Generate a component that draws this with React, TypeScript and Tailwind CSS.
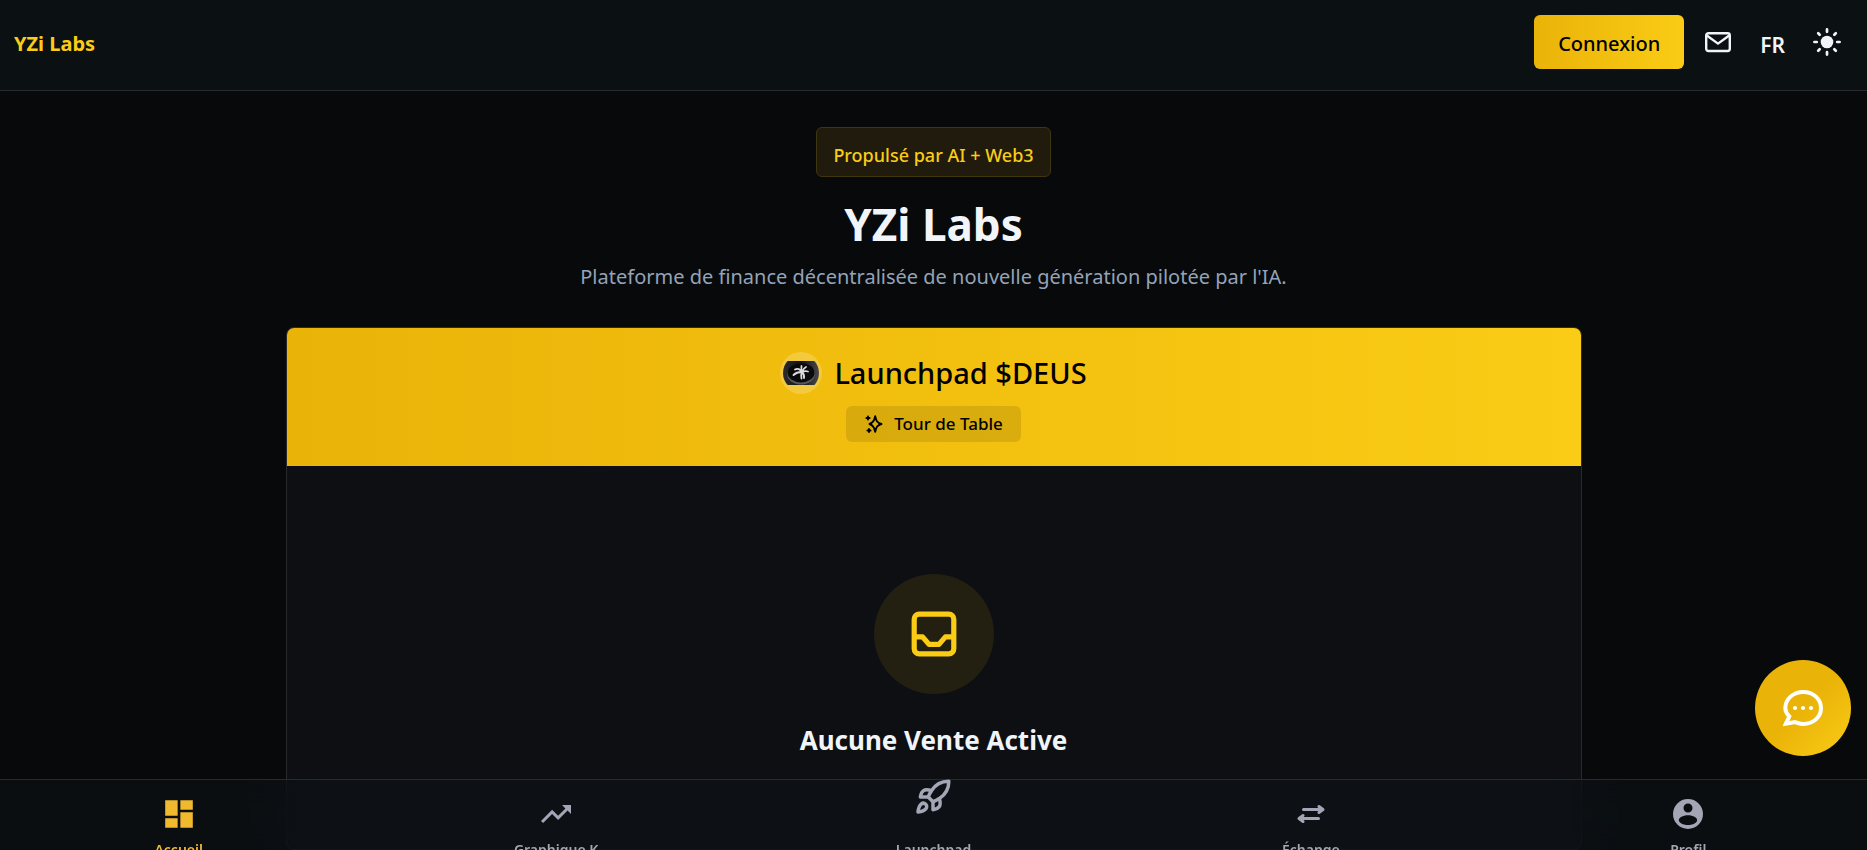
import type { ReactNode } from 'react';
import { LuRocket } from 'react-icons/lu';

interface NavItem {
  label: string;
  icon: ReactNode;
  active?: boolean;
  raised?: boolean;
}

const NAV_ITEMS: NavItem[] = [
  { label: 'Accueil', icon: <DashboardIcon />, active: true },
  { label: 'Graphique K', icon: <TrendingIcon /> },
  { label: 'Launchpad', icon: <LuRocket strokeWidth={2.2} className="w-[38px] h-[38px]" />, raised: true },
  { label: 'Échange', icon: <SwapIcon /> },
  { label: 'Profil', icon: <ProfileIcon /> },
];

function DashboardIcon() {
  return (
    <svg viewBox="0 0 24 24" fill="currentColor" className="w-9 h-9" aria-hidden="true">
      <path d="M2.800 2.800h8.300v10.300H2.800zM12.900 2.800h8.300v6.300h-8.300zM12.900 10.900h8.300v10.300h-8.300zM2.800 14.900h8.300v6.300H2.800z" />
    </svg>
  );
}

function TrendingIcon() {
  return (
    <svg viewBox="0 0 24 24" fill="currentColor" className="w-9 h-9" aria-hidden="true">
      <path d="m16 6 2.290 2.290-4.880 4.880-4-4L2 16.590 3.410 18l6-6 4 4 6.300-6.290L22 12V6z" />
    </svg>
  );
}

function SwapIcon() {
  return (
    <svg
      viewBox="0 0 24 24"
      fill="currentColor"
      stroke="currentColor"
      strokeWidth="2"
      strokeLinecap="round"
      strokeLinejoin="round"
      className="w-9 h-9"
      aria-hidden="true"
    >
      <path d="M7 9H19M17.300 7l2.700 2-2.700 2" />
      <path d="M17 15H5M6.700 13l-2.700 2 2.700 2" />
    </svg>
  );
}

function ProfileIcon() {
  return (
    <svg viewBox="0 0 24 24" fill="currentColor" className="w-9 h-9" aria-hidden="true">
      <path
        fillRule="evenodd"
        d="M12 2a10 10 0 1 0 0 20 10 10 0 0 0 0-20zm0 3a3 3 0 1 1 0 6 3 3 0 0 1 0-6zm0 7.900c3.500 0 6.100 1.700 6.100 3.200s-2.600 3.200-6.100 3.200-6.100-1.700-6.100-3.200 2.600-3.200 6.100-3.200z"
      />
    </svg>
  );
}

function MailIcon() {
  return (
    <svg viewBox="0 0 28 28" fill="none" stroke="currentColor" strokeWidth="2.400" strokeLinejoin="round" className="w-7 h-7" aria-hidden="true">
      <rect x="2.200" y="5.200" width="23.600" height="17.800" rx="2.200" />
      <path d="M2.800 7.500 14 15.600l11.200-8.100" />
    </svg>
  );
}

function SunIcon() {
  return (
    <svg viewBox="0 0 28 28" className="w-7 h-7" aria-hidden="true">
      <circle cx="14" cy="14" r="6.300" fill="currentColor" />
      <path
        d="M14 1.400v2.400M14 24.200v2.400M1.400 14h2.400M24.200 14h2.400M5.200 5.200l1.500 1.500M21.300 21.300l1.500 1.500M5.200 22.800l1.500-1.500M21.300 6.700l1.500-1.500"
        stroke="currentColor"
        strokeWidth="2.700"
        strokeLinecap="round"
      />
    </svg>
  );
}

function SparkIcon() {
  return (
    <svg
      viewBox="0 0 20 20"
      fill="none"
      stroke="currentColor"
      strokeWidth="1.900"
      strokeLinecap="round"
      strokeLinejoin="round"
      className="w-5 h-5"
      aria-hidden="true"
    >
      <path d="M11.200 2.300c.9 4.700 2.100 6.600 6.300 7.700-4.200 1.100-5.400 3-6.300 7.700-.9-4.700-2.100-6.600-5.700-7.700 3.600-1.100 4.800-3 5.700-7.700z" />
      <path d="M4 2.400v3.200M2.400 4h3.200M5 14.900v3.200M3.400 16.500h3.200" />
    </svg>
  );
}

function InboxIcon() {
  return (
    <svg
      viewBox="0 0 24 24"
      fill="none"
      stroke="currentColor"
      strokeWidth="2.600"
      strokeLinejoin="round"
      className="w-12 h-12"
      aria-hidden="true"
    >
      <rect x="2.100" y="2.100" width="19.800" height="19.800" rx="2.500" />
      <path d="M2 13.400h4.300l3.200 3.800h5l3.200-3.800H22" />
    </svg>
  );
}

function ChatIcon() {
  return (
    <svg viewBox="0 0 40 40" className="w-10 h-10" aria-hidden="true">
      <path
        d="M20.300 4C30.300 4 38 11 38 20s-7.700 16-17.700 16c-3.300 0-5.300-1-8.300-1.900L2.800 35.800l3.500-7.300C3.900 26 2.300 23.500 2.300 20c0-9 8-16 18-16z"
        fill="none"
        stroke="currentColor"
        strokeWidth="4"
      />
      <circle cx="12" cy="20" r="2.100" fill="currentColor" />
      <circle cx="20" cy="20" r="2.100" fill="currentColor" />
      <circle cx="28" cy="20" r="2.100" fill="currentColor" />
    </svg>
  );
}

function TokenLogo() {
  return (
    <svg viewBox="0 0 42 42" className="w-[42px] h-[42px]" aria-hidden="true">
      <defs>
        <clipPath id="token-clip">
          <circle cx="21" cy="21" r="18" />
        </clipPath>
        <linearGradient id="token-body" x1="0" x2="1">
          <stop offset="0" stopColor="#2c2c2e" />
          <stop offset="0.5" stopColor="#111112" />
          <stop offset="1" stopColor="#4a4a4d" />
        </linearGradient>
      </defs>
      <circle cx="21" cy="21" r="21" fill="#fff" fillOpacity="0.2" />
      <g clipPath="url(#token-clip)">
        <rect x="3" y="9" width="36" height="24" fill="url(#token-body)" />
        <ellipse cx="21" cy="22" rx="14" ry="10.500" fill="#58585b" />
        <ellipse cx="21" cy="20.700" rx="13.500" ry="9.700" fill="#0a0a0b" />
        <path
          d="M21.500 20c-1-3-4-4-6.500-2.500M21.500 20c-3 0-6 1-8 3M22 20c-.5-2-1-4-.5-6M22 20c1-3 2-4 4-5M22 20c2-1 4-1 6-.5M22 20c1.500 1.500 2.500 3.500 2 6M22 20c-1 2-1 4-.5 6.500"
          fill="none"
          stroke="#dcdce0"
          strokeWidth="1.800"
          strokeLinecap="round"
        />
      </g>
    </svg>
  );
}

function Header() {
  return (
    <header className="flex items-center justify-between h-[91px] shrink-0 pl-[14px] pr-[26px] pb-[6px] bg-[#0b1013] border-b border-[#272b30]">
      <a href="#" className="pt-1 text-[20px] font-bold text-[#facc15]">
        YZi Labs
      </a>
      <div className="flex items-center text-[#f1f5f9]">
        <button
          type="button"
          className="w-[150px] h-[54px] mr-5 pt-1 rounded-md bg-gradient-to-r from-[#eab308] to-[#facc15] text-black text-[20px] font-medium"
        >
          Connexion
        </button>
        <button type="button" aria-label="Messages" className="mr-7">
          <MailIcon />
        </button>
        <button type="button" className="mr-7 pt-2 text-[21px] font-semibold">
          FR
        </button>
        <button type="button" aria-label="Thème">
          <SunIcon />
        </button>
      </div>
    </header>
  );
}

function LaunchpadCard() {
  return (
    <section className="flex-1 w-full max-w-[1296px] mt-9 bg-[#0d0f13] border border-[#272b30] rounded-lg overflow-hidden">
      <div className="h-[138px] pt-6 flex flex-col items-center bg-gradient-to-r from-[#eab308] to-[#facc15] text-black">
        <div className="flex items-center gap-3">
          <TokenLogo />
          <h2 className="text-[29px] leading-[42px] font-medium">Launchpad $DEUS</h2>
        </div>
        <div className="flex items-center gap-2.5 h-9 mt-3 px-[18px] rounded-md bg-black/10 text-[17px] font-medium">
          <SparkIcon />
          Tour de Table
        </div>
      </div>
      <div className="flex flex-col items-center pt-[108px]">
        <div className="flex items-center justify-center w-[120px] h-[120px] rounded-full bg-[#231f11] text-[#facc15]">
          <InboxIcon />
        </div>
        <h3 className="mt-7 text-[26px] leading-9 font-bold text-[#f1f5f9]">Aucune Vente Active</h3>
      </div>
    </section>
  );
}

function BottomNav() {
  return (
    <nav className="fixed inset-x-0 bottom-0 h-[71px] grid grid-cols-5 gap-5 border-t border-[#272b30] bg-[#0e1418]/50 backdrop-blur-xl">
      {NAV_ITEMS.map((item) => (
        <a
          key={item.label}
          href="#"
          className={`flex flex-col items-center text-[14px] leading-5 font-semibold ${
            item.active ? 'text-[#f0b92e]' : 'text-[#a3a7b5]'
          }`}
        >
          <span className={`h-[60px] flex shrink-0 ${item.raised ? 'items-start -mt-[2px] mb-[2px]' : 'items-center pt-2'}`}>
            {item.icon}
          </span>
          {item.label}
        </a>
      ))}
    </nav>
  );
}

export default function App() {
  return (
    <div className="h-screen flex flex-col overflow-hidden bg-[#07090b] font-['Noto_Sans',sans-serif]">
      <Header />
      <main className="flex-1 flex flex-col items-center px-4 pt-9">
        <div className="h-[50px] px-4 pt-[6px] flex items-center rounded-md border border-[#3f360f] bg-[#211b0e] text-[#facc15] text-[18px] font-medium">
          Propulsé par AI + Web3
        </div>
        <h1 className="mt-5 text-[44px] leading-[54px] font-bold text-[#f1f5f9]">YZi Labs</h1>
        <p className="mt-3 text-[20px] leading-7 text-[#94a3b8]">
          Plateforme de finance décentralisée de nouvelle génération pilotée par l'IA.
        </p>
        <LaunchpadCard />
      </main>
      <BottomNav />
      <button
        type="button"
        aria-label="Discussion"
        className="fixed right-4 bottom-[94px] w-24 h-24 flex items-center justify-center rounded-full bg-gradient-to-br from-[#eab308] from-50% to-[#facc15] text-white"
      >
        <ChatIcon />
      </button>
    </div>
  );
}
